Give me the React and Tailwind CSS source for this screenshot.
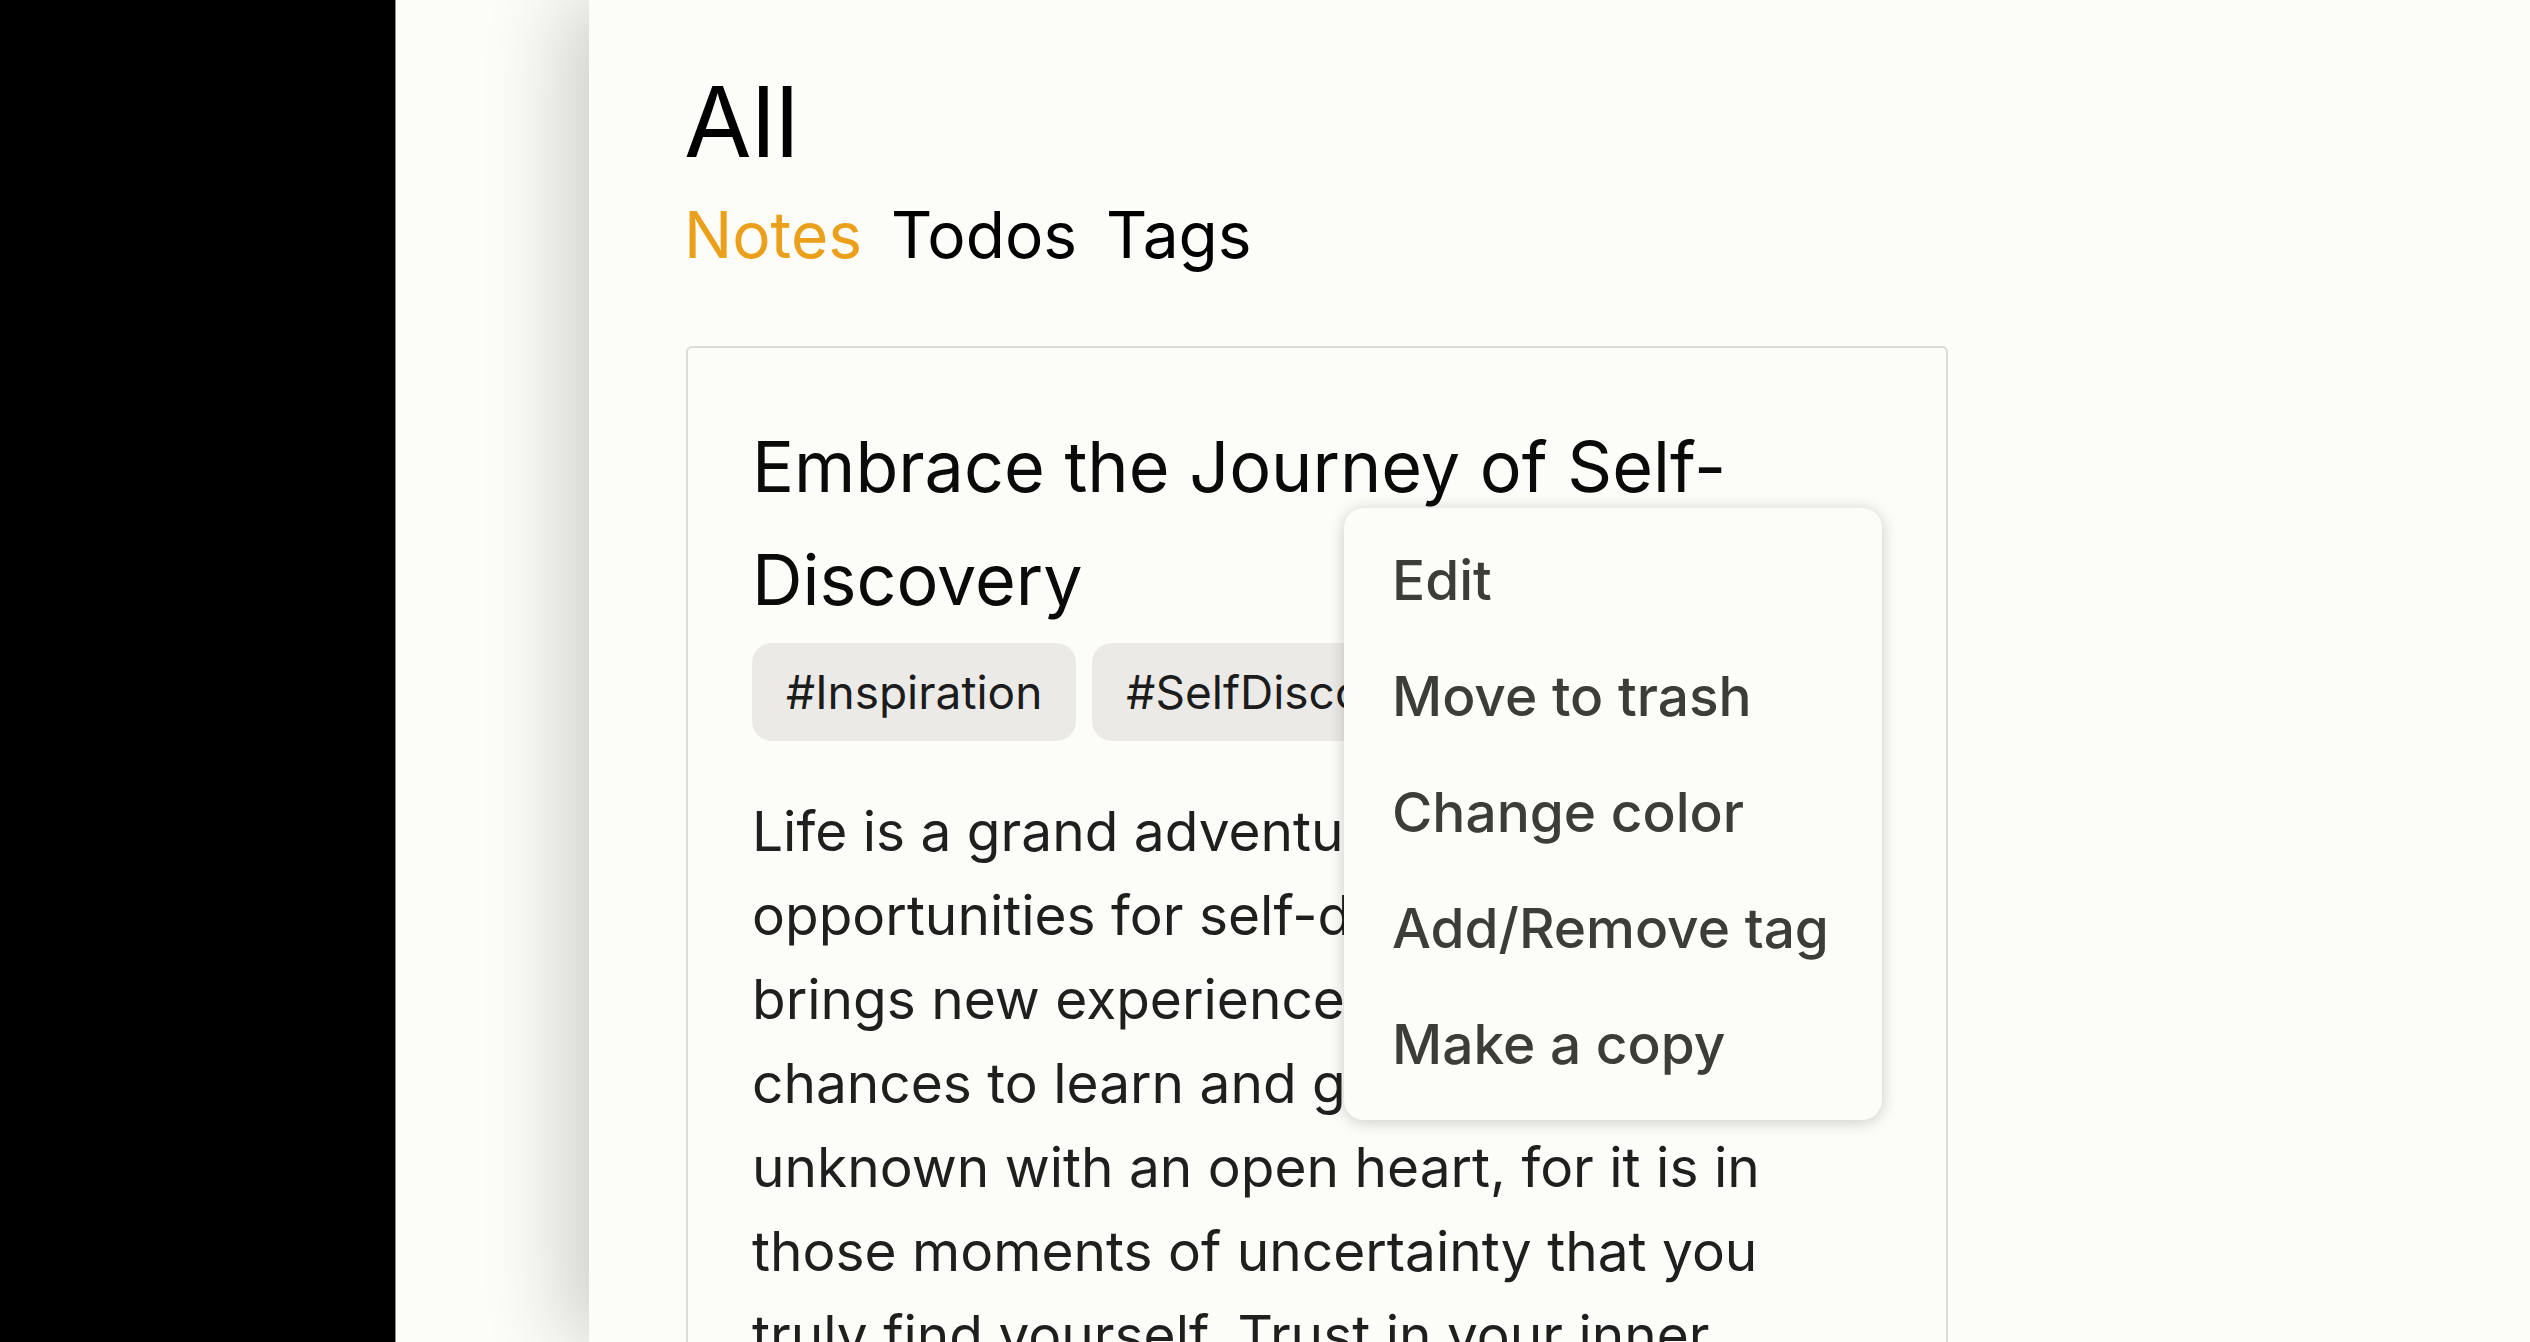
import React from 'react';

const bodyLines = [
  'Life is a grand adventure, filled with',
  'opportunities for self-discovery. Each day',
  'brings new experiences and new',
  'chances to learn and grow. Embrace the',
  'unknown with an open heart, for it is in',
  'those moments of uncertainty that you',
  'truly find yourself. Trust in your inner',
  'voice and let it guide you forward.',
];

const tags = ['#Inspiration', '#SelfDiscovery'];

const menuItems = ['Edit', 'Move to trash', 'Change color', 'Add/Remove tag', 'Make a copy'];

const NoteMenu = () => (
  <div className="absolute left-[656px] top-[160px] z-20 w-[538px] rounded-[20px] bg-[#fcfcf8] pt-[14px] pb-[18px] shadow-[0_2px_16px_rgba(0,0,0,0.2)]">
    {menuItems.map((item) => (
      <div
        key={item}
        className="whitespace-nowrap px-[48px] text-[55px] font-medium leading-[116px] text-[#3c3c39]"
      >
        {item}
      </div>
    ))}
  </div>
);

const NoteCard = () => (
  <article className="relative ml-[2px] mt-[79px] w-[1262px] rounded-[6px] border-2 border-[#dcdbd7] px-[64px] pt-[62px] pb-12">
    <h2 className="text-[70px] leading-[113px] text-[#0a0a0a]">
      Embrace the Journey of Self-
      <br />
      Discovery
    </h2>

    <div className="mt-[7px] flex gap-4">
      {tags.map((tag) => (
        <span
          key={tag}
          className="flex h-[98px] items-center rounded-[20px] bg-[#ebeae7] px-[34px] text-[46px] text-[#1c1c1c]"
        >
          {tag}
        </span>
      ))}
    </div>

    <p className="mt-12 text-[55px] leading-[84px] text-[#1f1f1f]">
      {bodyLines.map((line) => (
        <span key={line} className="block whitespace-nowrap">
          {line}
        </span>
      ))}
    </p>

    <NoteMenu />
  </article>
);

export default function App() {
  return (
    <div className="flex h-screen w-full overflow-hidden bg-[#fcfcf8] font-['Inter',sans-serif]">
      {/* Left side - dark rail */}
      <aside className="w-[396px] shrink-0 border-r border-[#8d8d8b] bg-black" />

      {/* Collapsed folder column */}
      <div className="w-[193px] shrink-0 bg-[#fcfcf8]" />

      {/* Main - notes list */}
      <main className="relative z-10 flex-1 bg-[#fcfcf8] pl-[95px] pt-[73px] shadow-[-20px_0_80px_rgba(0,0,0,0.2)]">
        <h1 className="text-[98px] leading-none text-black">All</h1>

        <nav className="mt-8 flex gap-[29px] text-[64px] leading-none">
          <button className="text-[#eba01b]">Notes</button>
          <button className="text-black">Todos</button>
          <button className="text-black">Tags</button>
        </nav>

        <NoteCard />
      </main>
    </div>
  );
}
